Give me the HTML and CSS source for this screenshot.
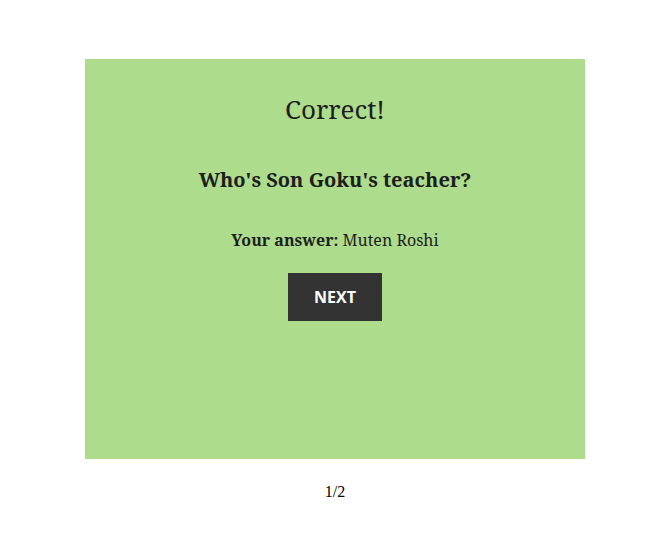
FILE: index.html
```html
<!DOCTYPE html>
<html>
<head>
<meta charset="utf-8">
<link rel="stylesheet" href="styles.css">
</head>
<body>
<main class="quiz">
  <section class="card">
    <h1 class="result">Correct!</h1>
    <h2 class="question">Who's Son Goku's teacher?</h2>
    <p class="answer"><strong>Your answer:</strong> Muten Roshi</p>
    <button class="next">NEXT</button>
  </section>
  <p class="progress">1/2</p>
</main>
</body>
</html>
```
FILE: styles.css
```css
html, body { margin: 0; padding: 0; background: #fff; }
.quiz { width: 500px; margin: 59px 0 0 85px; }
.card {
  background: #addc8c;
  height: 400px;
  box-sizing: border-box;
  display: flex;
  flex-direction: column;
  align-items: center;
  padding-top: 33px;
  font-family: "Noto Serif", "DejaVu Serif", serif;
  color: #1e1e1e;
}
.result { font-size: 26px; font-weight: 400; margin: 0; line-height: 34px; }
.question { font-size: 20px; font-weight: 700; margin: 40px 0 0; line-height: 28px; }
.answer { font-size: 16px; margin: 35px 0 0; line-height: 22px; }
.answer strong { font-weight: 700; }
.next {
  margin-top: 22px;
  width: 94px; height: 48px;
  background: #333; color: #fff; border: none;
  font-family: "Open Sans", sans-serif; font-weight: 700; font-size: 16px;
  padding: 0;
}
.progress { text-align: center; font-family: "Liberation Serif", serif; font-size: 16px; margin: 24px 0 0; }
```
